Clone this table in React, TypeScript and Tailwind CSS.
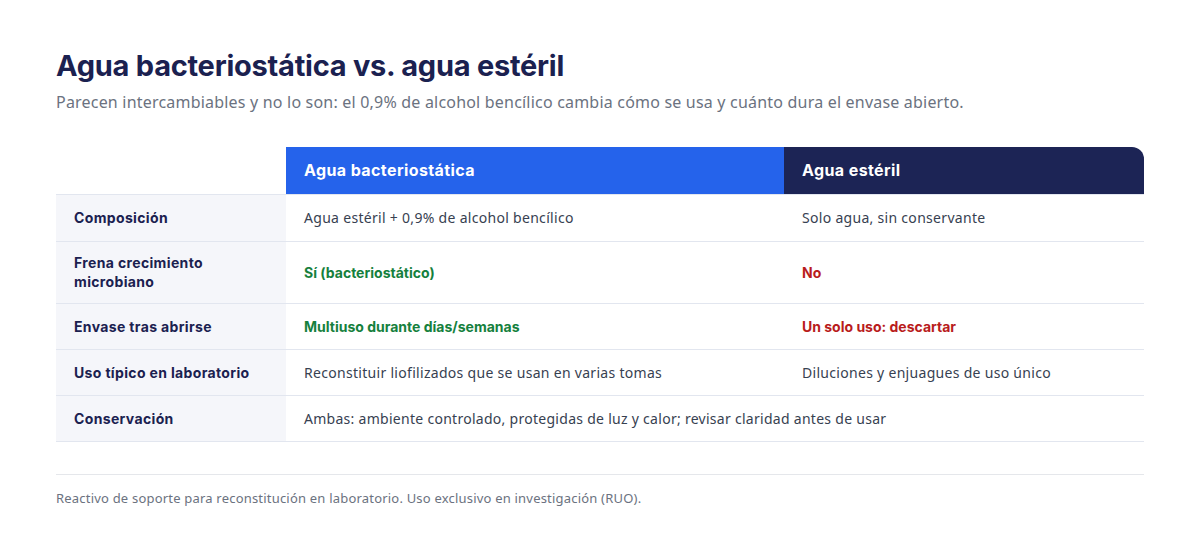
import React from "react";

const head = { fontFamily: "Inter, 'Noto Sans', sans-serif" };
const body = { fontFamily: "'Noto Sans', 'Open Sans', sans-serif" };

export default function App() {
  const rows: { label: React.ReactNode; a: React.ReactNode; b?: React.ReactNode; span?: boolean; h: string }[] = [
    { label: "Composición", a: "Agua estéril + 0,9% de alcohol bencílico", b: "Solo agua, sin conservante", h: "h-[47px]" },
    {
      label: (
        <>
          Frena crecimiento
          <br />
          microbiano
        </>
      ),
      a: <span className="font-bold text-[#15803d] tracking-normal" style={head}>Sí (bacteriostático)</span>,
      b: <span className="font-bold text-[#b91c1c] tracking-normal" style={head}>No</span>,
      h: "h-[62px]",
    },
    {
      label: "Envase tras abrirse",
      a: <span className="font-bold text-[#15803d] tracking-normal" style={head}>Multiuso durante días/semanas</span>,
      b: <span className="font-bold text-[#b91c1c] tracking-normal" style={head}>Un solo uso: descartar</span>,
      h: "h-[46px]",
    },
    { label: "Uso típico en laboratorio", a: "Reconstituir liofilizados que se usan en varias tomas", b: "Diluciones y enjuagues de uso único", h: "h-[46px]" },
    { label: "Conservación", a: "Ambas: ambiente controlado, protegidas de luz y calor; revisar claridad antes de usar", span: true, h: "h-[46px]" },
  ];
  return (
    <div className="w-[1200px] h-[560px] bg-white px-[56px] pt-[46px]" style={body}>
      <h1 className="text-[29px] leading-[40px] font-bold text-[#1b2150] tracking-[-0.25px]" style={head}>
        Agua bacteriostática vs. agua estéril
      </h1>
      <p className="mt-[4px] text-[16px] leading-[24px] text-[#6b7280] tracking-[0.2px]">
        Parecen intercambiables y no lo son: el 0,9% de alcohol bencílico cambia cómo se usa y cuánto dura el envase abierto.
      </p>
      <table className="mt-[33px] w-[1088px] border-collapse text-[14px]">
        <colgroup>
          <col className="w-[230px]" />
          <col className="w-[498px]" />
          <col className="w-[360px]" />
        </colgroup>
        <thead>
          <tr className="h-[47px]">
            <th></th>
            <th className="bg-[#2563eb] text-white text-left px-[18px] text-[16px] tracking-[0.4px] font-bold" style={head}>
              Agua bacteriostática
            </th>
            <th className="bg-[#1c2455] text-white text-left px-[18px] text-[16px] tracking-[0.4px] font-bold rounded-tr-[12px]" style={head}>
              Agua estéril
            </th>
          </tr>
        </thead>
        <tbody>
          {rows.map((r, i) => (
            <tr key={i} className={`border-t border-b border-[#e2e6ef] ${r.h}`}>
              <td className="bg-[#f5f6fa] px-[18px] font-bold text-[#1b2150] leading-[19px] tracking-[0.35px]" style={head}>
                {r.label}
              </td>
              {r.span ? (
                <td colSpan={2} className="px-[18px] text-[#374151] tracking-[0.28px]">
                  {r.a}
                </td>
              ) : (
                <>
                  <td className="px-[18px] text-[#374151] tracking-[0.3px]">{r.a}</td>
                  <td className="px-[18px] text-[#374151] tracking-[0.3px]">{r.b}</td>
                </>
              )}
            </tr>
          ))}
        </tbody>
      </table>
      <div className="mt-[32px] border-t border-[#e5e7eb] pt-[14px] text-[13px] text-[#6b7280] tracking-[0.2px]">
        Reactivo de soporte para reconstitución en laboratorio. Uso exclusivo en investigación (RUO).
      </div>
    </div>
  );
}
